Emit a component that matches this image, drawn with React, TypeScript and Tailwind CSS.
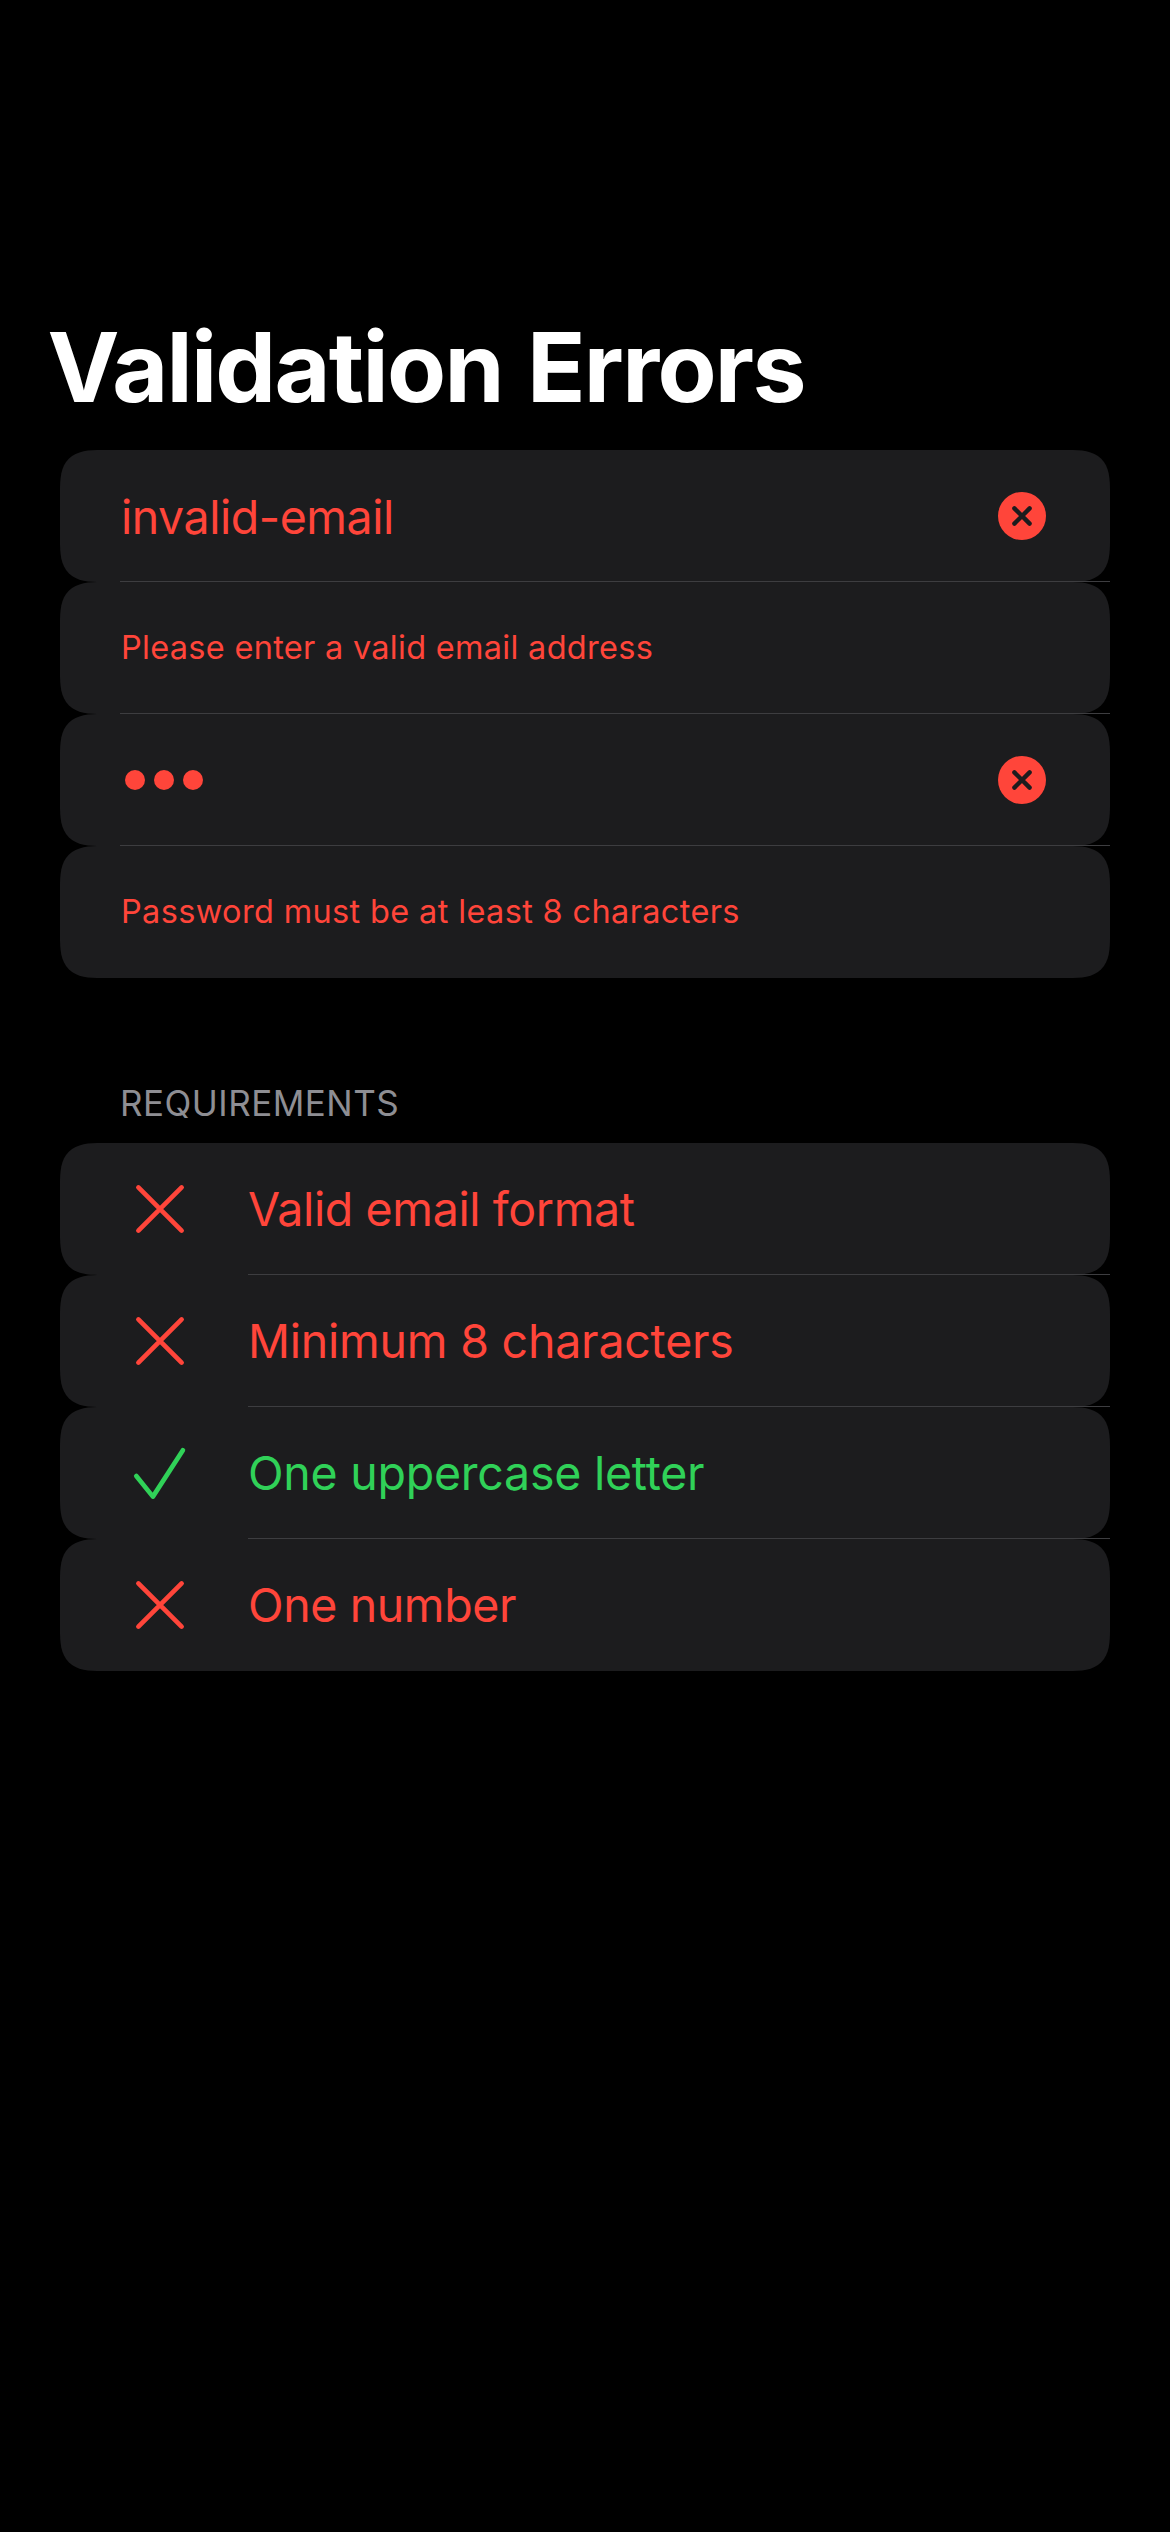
import type { ReactNode } from "react";

type RowProps = { children: ReactNode; divider?: boolean; inset?: "field" | "list" };

function Row({ children, divider = true, inset = "field" }: RowProps) {
  return (
    <div className="relative flex h-[132px] items-center rounded-[42px] bg-[#1c1c1e] px-[60px] [corner-shape:superellipse(1.56)]">
      {children}
      {divider && (
        <div
          className={
            inset === "field"
              ? "absolute right-0 bottom-0 left-[60px] h-px bg-[#3d3d40]"
              : "absolute right-0 bottom-0 left-[188px] h-px bg-[#3d3d40]"
          }
        />
      )}
    </div>
  );
}

function ErrorBadge() {
  return (
    <svg className="mr-1 ml-auto size-[48px]" viewBox="0 0 48 48" fill="none">
      <circle cx="24" cy="24" r="24" fill="#ff453a" />
      <path d="M16.4 16.4L31.6 31.6M31.6 16.4L16.4 31.6" stroke="#1c1c1e" strokeWidth="4.4" strokeLinecap="round" />
    </svg>
  );
}

function CrossIcon() {
  return (
    <svg className="size-[80px] shrink-0" viewBox="-40 -40 80 80" fill="none" stroke="#ff453a" strokeWidth="4.7" strokeLinecap="round">
      <path d="M-21.6 -21.6L21.6 21.6M21.6 -21.6L-21.6 21.6" />
    </svg>
  );
}

function CheckIcon() {
  return (
    <svg className="size-[80px] shrink-0" viewBox="-40 -40 80 80" fill="none" stroke="#30d158" strokeWidth="4.7" strokeLinecap="round" strokeLinejoin="round">
      <path d="M-23.7 3L-7.1 23.6L22.9 -22.8" />
    </svg>
  );
}

const requirements = [
  { label: "Valid email format", met: false, tracking: "tracking-[-0.386px]" },
  { label: "Minimum 8 characters", met: false, tracking: "tracking-[-0.227px]" },
  { label: "One uppercase letter", met: true, tracking: "tracking-[-0.246px]" },
  { label: "One number", met: false, tracking: "tracking-[-0.389px]" },
];

export default function App() {
  return (
    <div className="h-[2532px] w-[1170px] bg-black pt-[307px] font-[Inter,sans-serif] text-[#ff453a]">
      <h1 className="h-[143px] pl-[47.5px] text-[96.5px] leading-[120px] font-bold tracking-[-1.7px] whitespace-nowrap text-white [word-spacing:3px]">
        Validation Errors
      </h1>
      <section className="px-[60px]">
        <Row>
          <span className="pt-0.5 pl-px text-[46.5px] leading-[60px] tracking-[-0.473px]">invalid-email</span>
          <ErrorBadge />
        </Row>
        <Row>
          <span className="pl-px text-[32.5px] leading-[40px] tracking-[0.291px]">Please enter a valid email address</span>
        </Row>
        <Row>
          <div className="flex gap-[9px] pl-[5px]">
            <span className="size-[20px] rounded-full bg-[#ff453a]" />
            <span className="size-[20px] rounded-full bg-[#ff453a]" />
            <span className="size-[20px] rounded-full bg-[#ff453a]" />
          </div>
          <ErrorBadge />
        </Row>
        <Row divider={false}>
          <span className="pl-px text-[32.5px] leading-[40px] tracking-[0.351px]">Password must be at least 8 characters</span>
        </Row>
      </section>
      <section className="px-[60px] pt-[105px]">
        <h2 className="mb-[20px] pl-[60px] text-[35px] leading-[40px] tracking-[0.487px] text-[#8e8e93]">REQUIREMENTS</h2>
        {requirements.map((item, i) => (
          <Row key={item.label} inset="list" divider={i < requirements.length - 1}>
            {item.met ? <CheckIcon /> : <CrossIcon />}
            <span
              className={`pl-[48px] text-[46.5px] leading-[60px] ${item.tracking} ${item.met ? "text-[#30d158]" : "text-[#ff453a]"}`}
            >
              {item.label}
            </span>
          </Row>
        ))}
      </section>
    </div>
  );
}
